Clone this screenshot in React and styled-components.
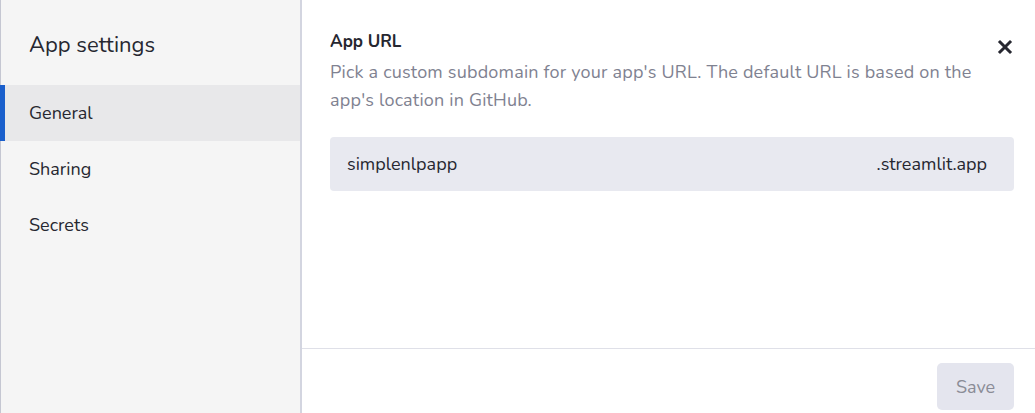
import React from 'react';
import styled, { createGlobalStyle } from 'styled-components';

const GlobalStyle = createGlobalStyle`
    html, body {
        margin: 0;
        padding: 0;
        background: #ffffff;
    }
    body {
        font-family: 'Nunito', 'Lato', 'Open Sans', sans-serif;
        color: #262730;
    }
`;

const Dialog = styled.div`
    display: flex;
    width: 1035px;
    height: 413px;
    overflow: hidden;
`;

const Sidebar = styled.nav`
    display: flex;
    flex-direction: column;
    width: 299px;
    flex-shrink: 0;
    background: #f5f5f5;
    border-left: 1px solid #c5c7d2;
    border-right: 2px solid #d3d5e0;
`;

const SidebarTitle = styled.h2`
    margin: 0;
    padding: 31px 0 0 28px;
    height: 85px;
    box-sizing: border-box;
    font-size: 22px;
    line-height: 28px;
    font-weight: 400;
    color: #262730;
`;

const NavList = styled.ul`
    display: flex;
    flex-direction: column;
    list-style: none;
    margin: 0;
    padding: 0;
`;

const NavItem = styled.li`
    display: flex;
    align-items: center;
    height: 56px;
    margin-left: -1px;
    padding-left: 24px;
    box-sizing: border-box;
    font-size: 18px;
    color: #262730;
    background: ${props => (props.active ? '#e8e8ea' : 'transparent')};
    border-left: 5px solid ${props => (props.active ? '#1a5fcc' : 'transparent')};
`;

const Main = styled.section`
    display: flex;
    flex-direction: column;
    flex: 1;
    background: #ffffff;
`;

const Content = styled.div`
    flex: 1;
    padding: 31px 21px 0 28px;
`;

const HeaderRow = styled.div`
    display: flex;
    justify-content: space-between;
    align-items: flex-start;
    height: 22px;
`;

const SectionTitle = styled.h3`
    margin: 0;
    font-size: 17px;
    font-weight: 700;
    line-height: 22px;
    color: #262730;
`;

const CloseButton = styled.button`
    display: flex;
    align-items: center;
    justify-content: center;
    width: 24px;
    height: 24px;
    margin-top: 4px;
    margin-right: -3px;
    padding: 0;
    border: none;
    background: none;
    color: #262730;
`;

const Description = styled.p`
    margin: 5px 0 0;
    width: 665px;
    font-size: 18px;
    letter-spacing: 0.2px;
    line-height: 28px;
    color: #7f8291;
`;

const UrlField = styled.div`
    display: flex;
    justify-content: space-between;
    align-items: center;
    height: 54px;
    margin-top: 23px;
    padding: 0 27px 0 17px;
    background: #e8e9f0;
    border-radius: 4px;
    font-size: 18px;
    color: #262730;
`;

const Footer = styled.div`
    display: flex;
    justify-content: flex-end;
    padding: 14px 21px 3px;
    border-top: 1px solid #dfe0e8;
`;

const SaveButton = styled.button`
    width: 77px;
    height: 47px;
    border: none;
    border-radius: 5px;
    background: #e4e5ee;
    font-family: inherit;
    font-size: 18px;
    color: #8a8c96;
`;

const sections = ['General', 'Sharing', 'Secrets'];

export default function App() {
    return (
        <>
            <GlobalStyle />
            <Dialog>
                <Sidebar>
                    <SidebarTitle>App settings</SidebarTitle>
                    <NavList>
                        {sections.map(name => (
                            <NavItem key={name} active={name === 'General'}>
                                {name}
                            </NavItem>
                        ))}
                    </NavList>
                </Sidebar>
                <Main>
                    <Content>
                        <HeaderRow>
                            <SectionTitle>App URL</SectionTitle>
                            <CloseButton aria-label="Close">
                                <svg width="16" height="16" viewBox="0 0 16 16">
                                    <path
                                        d="M3 3 L13 13 M13 3 L3 13"
                                        stroke="currentColor"
                                        strokeWidth="3"
                                        strokeLinecap="square"
                                    />
                                </svg>
                            </CloseButton>
                        </HeaderRow>
                        <Description>
                            Pick a custom subdomain for your app's URL. The default URL is based on the app's location in GitHub.
                        </Description>
                        <UrlField>
                            <span>simplenlpapp</span>
                            <span>.streamlit.app</span>
                        </UrlField>
                    </Content>
                    <Footer>
                        <SaveButton>Save</SaveButton>
                    </Footer>
                </Main>
            </Dialog>
        </>
    );
}
